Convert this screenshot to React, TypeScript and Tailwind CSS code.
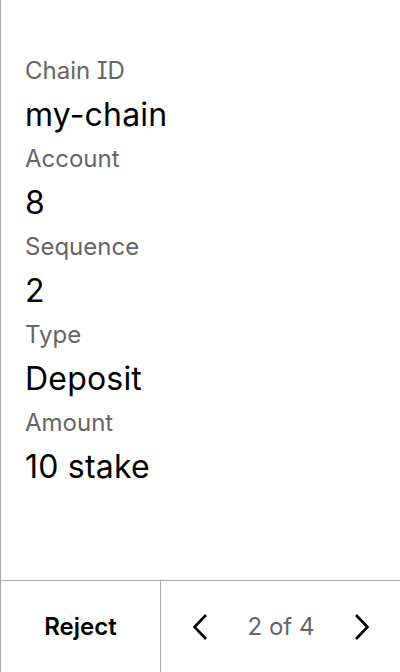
import React from "react";

const rows = [
  ["Chain ID", "my-chain"],
  ["Account", "8"],
  ["Sequence", "2"],
  ["Type", "Deposit"],
  ["Amount", "10 stake"],
];

export default function App() {
  return (
    <div
      className="w-[400px] h-[672px] flex flex-col bg-white border-l border-[#a8a8a8] text-black [font-feature-settings:'cv08']"
      style={{ fontFamily: "Inter, 'Noto Sans', sans-serif" }}
    >
      <div className="flex-1 flex flex-col pl-6 pt-[57px]">
        {rows.map(([label, value]) => (
          <div key={label} className="flex flex-col h-[88px]">
            <div className="text-[24px] leading-[28px] text-[#666666] whitespace-nowrap">{label}</div>
            <div className="text-[32px] leading-[60px] text-black whitespace-nowrap tracking-[0.2px]">{value}</div>
          </div>
        ))}
      </div>
      <div className="h-[92px] border-t border-[#a8a8a8] flex">
        <div className="w-[159px] flex items-center justify-center text-[24px] font-semibold">
          Reject
        </div>
        <div className="flex-1 border-l border-[#a8a8a8] flex items-center justify-between pl-[31px] pr-[30px]">
          <svg width="16" height="28" viewBox="0 0 16 28" fill="none" stroke="black" strokeWidth="2.6">
            <path d="M14 2 L2.5 14 L14 26" />
          </svg>
          <span className="text-[24px] text-[#666666]">2 of 4</span>
          <svg width="16" height="28" viewBox="0 0 16 28" fill="none" stroke="black" strokeWidth="2.6">
            <path d="M2 2 L13.5 14 L2 26" />
          </svg>
        </div>
      </div>
    </div>
  );
}
